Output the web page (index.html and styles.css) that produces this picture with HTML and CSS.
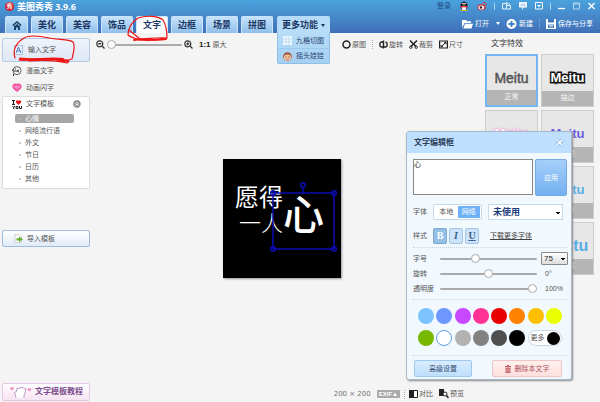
FILE: index.html
```
<!DOCTYPE html>
<html lang="zh-CN">
<head>
    <meta charset="UTF-8">
    <meta name="viewport" content="width=device-width, initial-scale=1.0">
    <title>美图秀秀 3.9.6</title>
    <link rel="stylesheet" href="styles.css">
</head>
<body>
    <!-- Title bar, tabs and file actions -->
    <header class="header">
        <div class="title-row">
            <h1 class="title"><span class="logo">秀</span>美图秀秀 3.9.6</h1>
            <div class="window-tools">
                <a class="login" href="#">登录</a>
                <svg class="qq" width="10" height="10" viewBox="0 0 10 10"><ellipse cx="5" cy="5" rx="3.6" ry="4.6" fill="#182238"/><ellipse cx="5" cy="7" rx="2.4" ry="2.2" fill="#fff"/><path d="M1.5 5h7v1.3h-7z" fill="#e33"/><path d="M3.5 3.6h3L5 4.7zM1.5 9h3v1h-3zM5.500 9h3v1h-3z" fill="#fb2"/><circle cx="3.900" cy="2.500" r=".8" fill="#fff"/><circle cx="6.100" cy="2.500" r=".8" fill="#fff"/></svg>
                <svg class="weibo" width="10" height="10" viewBox="0 0 10 10"><ellipse cx="4.500" cy="6.300" rx="4" ry="3" fill="#e02b2b"/><ellipse cx="4.300" cy="6.400" rx="2.800" ry="2" fill="#fff"/><circle cx="4" cy="6.500" r="1.200" fill="#222"/><path d="M6 1.500c2-.5 3.500 1 3 3" fill="none" stroke="#e02b2b"/></svg>
                <span class="bar"></span>
                <svg class="skin" width="9" height="8" viewBox="0 0 9 8"><path d="M.5 1.500h4v5.500h-4zM4.500 3.500h4V7h-4zM4 .5l4 2" fill="none" stroke="#e8f3fc"/></svg>
                <svg class="chat" width="8" height="8" viewBox="0 0 8 8"><path d="M0 0h8v5.500H4.500L3 8V5.500H0z" fill="#f2f8fe"/><path d="M1.500 2h5M1.500 3.500h5" stroke="#8fb9e0" stroke-width=".6"/></svg>
                <svg class="menu" width="8" height="8" viewBox="0 0 8 8"><path d="M.5.5h7v6.500h-7z" fill="none" stroke="#f2f8fe"/><path d="M2 3h4L4 5.200z" fill="#fff"/></svg>
                <span class="bar"></span>
                <svg class="minimize" width="7" height="8" viewBox="0 0 7 8"><path d="M0 6.500h7" stroke="#fff" stroke-width="1.300"/></svg>
                <svg class="maximize" width="7" height="8" viewBox="0 0 7 8"><path d="M.5 1h6v6h-6zM.5 2h6" fill="none" stroke="#b7d6f0"/></svg>
                <svg class="close" width="7" height="8" viewBox="0 0 7 8"><path d="M.5 1l6 6M6.500 1l-6 6" stroke="#fff" stroke-width="1.400"/></svg>
            </div>
        </div>
        <div class="nav-row">
            <nav class="tabs">
                <button class="tab home" aria-label="首页"><svg width="10" height="9" viewBox="0 0 10 9"><path d="M.8 4.600L5 1l4.200 3.600" fill="none" stroke="#1d3f6b" stroke-width="1.500"/><path d="M2 5.500L5 3l3 2.500V9H6V6.500H4V9H2z" fill="#1d3f6b"/></svg></button>
                <button class="tab">美化</button>
                <button class="tab">美容</button>
                <button class="tab">饰品</button>
                <button class="tab active">文字</button>
                <button class="tab">边框</button>
                <button class="tab">场景</button>
                <button class="tab">拼图</button>
                <div class="more">
                    <button class="tab more-tab">更多功能 <i class="caret"></i></button>
                    <div class="more-menu">
                        <button><svg width="9" height="9" viewBox="0 0 9 9"><path d="M0 0h9v9H0z" fill="#f5fbff"/><path d="M3 0v9M6 0v9M0 3h9M0 6h9" stroke="#a9d0f0" stroke-width=".7"/></svg>九格切图</button>
                        <button><svg width="9" height="9" viewBox="0 0 9 9"><circle cx="4.500" cy="4.500" r="4.300" fill="#a5573b"/><ellipse cx="4.500" cy="5.500" rx="3.600" ry="3" fill="#f3c4a2"/><circle cx="3" cy="5" r=".6" fill="#532"/><circle cx="6" cy="5" r=".6" fill="#532"/><path d="M3.500 7h2" stroke="#c44" stroke-width=".7"/></svg>摇头娃娃</button>
                    </div>
                </div>
            </nav>
            <div class="file-actions">
                <button><svg width="11" height="10" viewBox="0 0 11 10"><path d="M0 9V1h4l1 1.200h4V4H2.500z" fill="#fff"/><path d="M3 4.700h8L9.500 9.500H1.300z" fill="#fff"/></svg>打开 <i class="caret"></i></button>
                <button class="new"><svg width="11" height="10" viewBox="0 0 11 10"><circle cx="5.500" cy="5" r="5" fill="#fff"/><path d="M5.500 2v6M2.500 5h6" stroke="#3f7fc4" stroke-width="1.800"/></svg>新建</button>
                <button class="save"><svg width="10" height="10" viewBox="0 0 10 10"><path d="M0 0h10v10H0z" fill="#fff"/><path d="M2 0h6v3.500H2zM2 5.500h6V9H2z" fill="#4279be"/><path d="M3 6.500h4M3 8h4" stroke="#fff" stroke-width=".7"/></svg>保存与分享</button>
            </div>
        </div>
    </header>

    <main class="main">
        <!-- Text tools -->
        <aside class="sidebar">
            <button class="side-btn input-text"><svg width="9" height="10" viewBox="0 0 9 10"><path d="M.5.5h8v9h-8z" fill="#eef4fc" stroke="#a9bede"/><path d="M2 8l2.500-6L7 8M3 6h3" fill="none" stroke="#4676bf"/></svg>输入文字</button>
            <button class="side-link"><svg width="10" height="10" viewBox="0 0 10 10"><circle cx="5" cy="4.600" r="4" fill="#fff" stroke="#444" stroke-width=".9"/><path d="M0 4h2M2 5h5M6 3.500v3M1.500 8v2M3 3h1" stroke="#333" fill="none"/></svg>漫画文字</button>
            <button class="side-link"><svg width="10" height="9" viewBox="0 0 10 9"><path d="M5 9L1 5.500C-.8 2.500 2-.8 5 1c3-1.800 5.800 1.500 4 4.500z" fill="#f04ca0"/><path d="M3 2.500v3M5 2v5M7 2.500v3M2 4h6" stroke="#fbb5da" stroke-width=".7"/></svg>动画闪字</button>
            <section class="templates">
                <h2><svg width="10" height="9" viewBox="0 0 10 9"><path d="M0 .5h3M1.500.5v4M0 4.500h3" stroke="#222" stroke-width="1.200"/><path d="M6.500 5L4 2.500C3.500.5 5.500-.5 6.500 1 7.500-.5 9.800.5 9 2.500z" fill="#e31414"/><path d="M.5 6l1.200 1.500L3 6M1.700 7.500V9M4 6.500h2v2H4zM7.500 6v2.500h2V6" fill="none" stroke="#222"/></svg>文字模板<span class="collapse"><svg width="8" height="8" viewBox="0 0 8 8"><circle cx="4" cy="4" r="3.700" fill="#8c8c8c"/><path d="M2.200 4L4 2.300 5.800 4M2.200 5.800L4 4l1.800 1.800" fill="none" stroke="#fff" stroke-width=".9"/></svg></span></h2>
                <ul>
                    <li class="selected">心情</li>
                    <li>网络流行语</li>
                    <li>外文</li>
                    <li>节日</li>
                    <li>日历</li>
                    <li>其他</li>
                </ul>
            </section>
            <button class="side-btn import"><svg width="9" height="9" viewBox="0 0 9 9"><path d="M1 .5h4.500l2 2V8.500H1z" fill="#fff" stroke="#bbb" stroke-width=".7"/><path d="M2.500 4.300H5V2.500L9 5.300 5 8V6.400H2.500z" fill="#62b22b"/></svg>导入模板</button>
            <button class="side-btn tutorial"><svg width="22" height="13" viewBox="0 0 22 13"><path d="M6 11.500L4.500 6.500l2-1L7 2.500h2l.5-1 2 .3 1.500-.3 1 1.200 2 .3-1 4-1 2v2.500" fill="#fff" stroke="#a77bb5" stroke-dasharray="1.500 .5"/><path d="M2 4.500L.3 2.800C0 1.300 1.500.9 2 2c.5-1.100 2-.7 1.700.8zM19.500 5.500l-1.700-1.700c-.3-1.500 1.200-1.900 1.700-.8.500-1.100 2-.7 1.700.8z" fill="#eb86b8"/></svg>文字模板教程</button>
        </aside>

        <!-- Picture being edited -->
        <section class="workspace">
            <div class="toolbar">
                <div class="zoom-tools">
                    <svg width="9" height="9" viewBox="0 0 9 9"><circle cx="3.800" cy="3.800" r="3" fill="#fff" stroke="#333" stroke-width="1.200"/><path d="M6 6l2.500 2.500M2.300 3.800h3" stroke="#333" stroke-width="1.400"/></svg>
                    <input class="range zoom-range" type="range" aria-label="缩放" value="0">
                    <svg width="9" height="9" viewBox="0 0 9 9"><circle cx="3.800" cy="3.800" r="3" fill="#fff" stroke="#333" stroke-width="1.200"/><path d="M6 6l2.500 2.500M2.300 3.800h3M3.800 2.300v3" stroke="#333" stroke-width="1.300"/></svg>
                    <button class="actual"><b>1:1</b> 原大</button>
                </div>
                <div class="edit-tools">
                    <button><svg width="9" height="9" viewBox="0 0 9 9"><circle cx="4.500" cy="4.500" r="3.500" fill="none" stroke="#222" stroke-width="1.500"/></svg>原图</button>
                    <i class="dots"></i>
                    <button><svg width="9" height="9" viewBox="0 0 9 9"><path d="M4 7H2.500C.2 6.500.2 2.500 2.500 2H5M5 7h1.500C8.800 6.500 8.800 2.500 6.500 2M4.500.5v8" fill="none" stroke="#222" stroke-width="1.400"/></svg>旋转</button>
                    <button><svg width="9" height="9" viewBox="0 0 9 9"><path d="M1 .5l6 6M8 .5l-6 6" stroke="#222" stroke-width="1.500"/><circle cx="1.800" cy="7.200" r="1.200" fill="none" stroke="#222"/><circle cx="7.200" cy="7.200" r="1.200" fill="none" stroke="#222"/></svg>裁剪</button>
                    <button><svg width="9" height="9" viewBox="0 0 9 9"><path d="M.6 1h7.800v7H.6z" fill="none" stroke="#222" stroke-width="1.200"/><path d="M2 6.800L7 2.200M5 2.200h2v2M2 5v1.800h2" fill="none" stroke="#222"/></svg>尺寸</button>
                </div>
            </div>
            <div class="stage">
                <svg class="picture" width="118" height="119" viewBox="0 0 118 119">
                    <rect width="118" height="119" fill="#000"/>
                    <text x="12" y="47" font-size="24">愿得</text>
                    <text class="light" x="16" y="72" font-size="22">一人</text>
                    <text x="60" y="71" font-size="41" font-weight="500">心</text>
                    <g class="handles">
                        <path d="M50 34h61v56H50zM80 34v-6"/>
                        <circle cx="50" cy="34" r="2.300"/><circle cx="111" cy="34" r="2.300"/><circle cx="50" cy="90" r="2.300"/><circle cx="111" cy="90" r="2.300"/><circle cx="80" cy="26" r="2.300"/>
                    </g>
                </svg>
            </div>
            <footer class="status">
                <span class="size">200 × 200</span>
                <span class="exif">EXIF▲</span>
                <i class="dots"></i>
                <button><svg width="9" height="8" viewBox="0 0 9 8"><path d="M.5.5h8v7h-8z" fill="#fff" stroke="#222"/><path d="M0 0h5v8H0z" fill="#222"/></svg>对比</button>
                <button class="preview"><svg width="10" height="10" viewBox="0 0 10 10"><path d="M0 0h5v7H0z" fill="#222"/><circle cx="6" cy="5" r="2" fill="#fff" stroke="#222"/><path d="M7.500 6.500L9.500 9" stroke="#222" stroke-width="1.500"/></svg>预览</button>
            </footer>
        </section>

        <aside class="effects">
            <h2>文字特效</h2>
            <div class="effect-grid">
                <button class="effect current"><span class="sample">Meitu</span><span class="name">正常</span></button>
                <button class="effect outline"><span class="sample">Meitu</span><span class="name">描边</span></button>
                <button class="effect glow"><span class="sample">Meitu</span><span class="name">荧光</span></button>
                <button class="effect pattern"><span class="sample">Meitu</span><span class="name">纹理</span></button>
                <button class="effect"><span class="sample">Meitu</span><span class="name">阴影</span></button>
                <button class="effect fade"><span class="sample">Meitu</span><span class="name">渐变</span></button>
                <button class="effect"><span class="sample">Meitu</span><span class="name">倒影</span></button>
                <button class="effect fade large"><span class="sample">Meitu</span><span class="name">立体</span></button>
            </div>
        </aside>
    </main>

    <!-- Floating text editor -->
    <form class="dialog">
        <div class="dialog-head">
            <h2>文字编辑框</h2>
            <button type="button" class="dialog-close" aria-label="关闭"><svg width="9" height="9" viewBox="0 0 9 9"><path d="M1.500 1.500l6 6M7.500 1.500l-6 6" stroke="#87b4df" stroke-width="3"/><path d="M1.500 1.500l6 6M7.500 1.500l-6 6" stroke="#fff" stroke-width="1.500"/></svg></button>
        </div>
        <div class="dialog-body">
            <div class="entry">
                <textarea aria-label="文字内容">心</textarea>
                <button type="button" class="apply">应用</button>
            </div>
            <div class="row">
                <label for="font">字体</label>
                <div class="segment"><button type="button">本地</button><button type="button" class="on">网络</button></div>
                <select id="font" class="font-select"><option>未使用</option></select>
            </div>
            <div class="row styles">
                <span class="row-label">样式</span>
                <div class="style-btns">
                    <button type="button" class="on"><b>B</b></button>
                    <button type="button"><i>I</i></button>
                    <button type="button"><u>U</u></button>
                </div>
                <a href="#">下载更多字体</a>
            </div>
            <div class="sliders">
                <label for="size">字号</label>
                <input id="size" class="range" type="range" value="35">
                <select class="size-select" aria-label="字号数值"><option>75</option></select>
                <label for="rotate">旋转</label>
                <input id="rotate" class="range" type="range" value="50">
                <output>0°</output>
                <label for="opacity">透明度</label>
                <input id="opacity" class="range" type="range" value="100">
                <output>100%</output>
            </div>
            <div class="swatches">
                <button type="button" class="sky" aria-label="天蓝"></button>
                <button type="button" class="blue" aria-label="蓝"></button>
                <button type="button" class="purple" aria-label="紫"></button>
                <button type="button" class="pink" aria-label="粉"></button>
                <button type="button" class="red" aria-label="红"></button>
                <button type="button" class="orange" aria-label="橙"></button>
                <button type="button" class="amber" aria-label="金"></button>
                <button type="button" class="yellow" aria-label="黄"></button>
                <button type="button" class="green" aria-label="绿"></button>
                <button type="button" class="white" aria-label="白"></button>
                <button type="button" class="silver" aria-label="浅灰"></button>
                <button type="button" class="gray" aria-label="灰"></button>
                <button type="button" class="dark" aria-label="深灰"></button>
                <button type="button" class="black" aria-label="黑"></button>
                <button type="button" class="more-colors">更多<i></i></button>
            </div>
            <div class="dialog-foot">
                <button type="button" class="advanced">高级设置</button>
                <button type="button" class="delete"><svg width="6" height="8" viewBox="0 0 6 8"><path d="M0 1.500h6M2 .5h2" stroke="#c4636b"/><path d="M.5 2.500h5V8h-5z" fill="#c4636b"/><path d="M2 3.500v3.500M4 3.500v3.500" stroke="#fde0df" stroke-width=".6"/></svg>删除本文字</button>
            </div>
        </div>
    </form>

    <!-- Red pen marks -->
    <svg class="marks" width="180" height="70" viewBox="0 0 180 70">
        <path d="M15 58c-3-8 2-16 9-20 5-3 16-2 25 0 10 2 20 1 24 4 3 4 0 12-1 17l-4 1c-12-1-30 0-48-2M19 60c10 1 22-2 34-1 6 1 10 3 16 2l-2 2c-12-3-26-3-38-2"/>
        <path d="M140 40c-6-2-10-3-12-5 0-7 4-13 10-17 10-3 20-2 25 2 3 5 4 12 4 18-8 2-18 3-28 2M129 30l11 9c8 0 18-2 27-1-10 2-20 3-30 1"/>
        <path class="thick" d="M20 59c12 2 28-2 43 0M134 40c10-2 20 1 32-1"/>
    </svg>
</body>
</html>
```
FILE: styles.css
```
* {
    box-sizing: border-box;
}

body {
    display: flex;
    flex-direction: column;
    min-height: 100vh;
    margin: 0;
    position: relative;
    background-color: #f4f4f4;
    color: #555;
    font-family: "Liberation Sans", "Noto Sans CJK SC", sans-serif;
    font-size: 7px;
    line-height: 10px;
}

h1, h2, ul {
    margin: 0;
    padding: 0;
}

button, select, textarea, input {
    margin: 0;
    padding: 0;
    border: none;
    background: none;
    color: inherit;
    font: inherit;
}

button {
    display: flex;
    align-items: center;
    white-space: nowrap;
    cursor: pointer;
}

svg {
    display: block;
    flex-shrink: 0;
}

.caret {
    border: 2px solid transparent;
    border-top: 3px solid currentColor;
    border-bottom: none;
}

.dots {
    height: 9px;
    border-left: 1px dotted #aaa;
}

/* Header */
.header {
    display: flex;
    flex-direction: column;
    height: 33px;
    background: linear-gradient(#4ba2dd, #406fb8);
    color: white;
}

.title-row, .nav-row {
    display: flex;
    justify-content: space-between;
}

.title-row {
    height: 16px;
    padding: 0 5px;
}

.title {
    display: flex;
    align-items: center;
    gap: 3px;
    height: 13px;
    font-family: "Noto Sans", "Noto Sans CJK SC", sans-serif;
    font-size: 9px;
}

.logo {
    width: 9px;
    height: 9px;
    border-radius: 50%;
    background-color: #dd202c;
    font-size: 6px;
    line-height: 9px;
    text-align: center;
}

.window-tools {
    display: flex;
    align-items: center;
    gap: 8px;
    height: 12px;
}

.login {
    color: #1d4f85;
    text-decoration: none;
}

.bar {
    width: 1px;
    height: 7px;
    margin: 0 -1px;
    background-color: #a8d0f0;
}

.nav-row {
    height: 17px;
    padding: 0 7px 0 5px;
}

.tabs {
    display: flex;
    gap: 3px;
}

.tab {
    justify-content: center;
    width: 32px;
    height: 17px;
    border: 1px solid #cbe4f8;
    border-bottom: none;
    border-radius: 2px 2px 0 0;
    background: linear-gradient(#c5e3fa, #90c0eb);
    color: #1d3763;
    font-size: 9px;
    font-weight: bold;
}

.tab.home {
    width: 23px;
}

.tab.active {
    background: #fcfdfe;
}

.more {
    position: relative;
    margin-left: 1px;
}

.more-tab {
    gap: 3px;
    width: 53px;
    border-color: #b5daf7;
    background: #b7dcf8;
}

.more-menu {
    position: absolute;
    z-index: 2;
    top: 17px;
    left: 0;
    width: 100%;
    border: 1px solid #8fbfe8;
    border-top: none;
    border-radius: 0 0 2px 2px;
    background: linear-gradient(#b7dcf8, #a5cff2);
}

.more-menu button {
    gap: 4px;
    width: 100%;
    height: 15px;
    padding-left: 5px;
    color: #27446f;
}

.more-menu button + button {
    border-top: 1px solid #9bc8ee;
}

.file-actions {
    display: flex;
    align-items: center;
    gap: 6px;
    height: 15px;
}

.file-actions button {
    gap: 2px;
}

.file-actions .caret {
    margin-left: 5px;
}

.file-actions .save {
    padding-left: 6px;
    border-left: 1px dotted #7fa9db;
}

/* Main */
.main {
    display: flex;
    flex: 1;
}

.sidebar {
    display: flex;
    flex-direction: column;
    width: 90px;
    padding: 5px 0 1px 2px;
}

.side-btn {
    gap: 4px;
    height: 17px;
    padding-left: 11px;
    border: 1px solid #9fbbe0;
    border-radius: 2px;
    background: linear-gradient(#fff, #e0ebf8);
}

.side-btn.input-text {
    gap: 5px;
    height: 24px;
    border-color: #b7cbe6;
    background: linear-gradient(#eef3fa, #dee7f5);
}

.side-link {
    gap: 4px;
    height: 17px;
    padding-left: 10px;
}

.templates {
    height: 93px;
    border: 1px solid #ddd;
    border-radius: 2px;
    background-color: white;
}

.templates h2 {
    display: flex;
    align-items: center;
    gap: 4px;
    height: 14px;
    padding: 0 8px 0 9px;
    font-size: 7px;
    font-weight: normal;
}

.collapse {
    margin-left: auto;
}

.templates ul {
    display: grid;
    gap: 3px;
    padding: 3px 15px 0 12px;
    list-style: none;
}

.templates li {
    height: 9px;
    padding-left: 4px;
    border-radius: 2px;
    line-height: 9px;
    white-space: nowrap;
}

.templates li::before {
    content: "";
    display: inline-block;
    width: 2px;
    height: 2px;
    margin-right: 4px;
    border-radius: 50%;
    background-color: #bbb;
    vertical-align: middle;
}

.templates .selected {
    background-color: #a6a6a6;
    color: white;
}

.import {
    margin-top: 41px;
}

.tutorial {
    gap: 3px;
    height: 18px;
    margin-top: auto;
    padding-left: 7px;
    border-color: #e5c9e2;
    background: linear-gradient(#fff, #f6e3f3);
    color: #7c4d8b;
    font-size: 8px;
    font-weight: bold;
}

.workspace {
    display: flex;
    flex: 1;
    flex-direction: column;
}

.toolbar {
    display: flex;
    justify-content: space-between;
    height: 23px;
    padding: 0 22px 0 6px;
}

.zoom-tools, .edit-tools {
    display: flex;
    align-items: center;
    gap: 2px;
}

.edit-tools {
    gap: 6px;
}

.edit-tools button, .status button {
    gap: 1px;
}

.zoom-range {
    width: 75px;
}

.actual {
    gap: 2px;
    margin-left: 4px;
}

.actual b {
    color: #222;
    font-size: 8px;
}

.range {
    height: 9px;
    appearance: none;
}

.range::-webkit-slider-runnable-track {
    height: 2px;
    border-radius: 1px;
    background-color: #aaa;
}

.range::-webkit-slider-thumb {
    width: 9px;
    height: 9px;
    margin-top: -4px;
    border: 1px solid #aaa;
    border-radius: 50%;
    appearance: none;
    background-color: white;
}

.stage {
    display: flex;
    flex: 1;
    align-items: center;
    justify-content: center;
    padding-bottom: 6px;
    padding-right: 11px;
}

.picture {
    box-shadow: 1px 1px 2px #999;
    fill: white;
    font-family: "Noto Sans CJK SC", sans-serif;
}

.picture .light {
    font-weight: 300;
}

.handles {
    fill: none;
    stroke: #0c0cb4;
    stroke-width: 1.5;
}

.status {
    display: flex;
    align-items: center;
    justify-content: flex-end;
    gap: 4px;
    height: 16px;
    padding-right: 21px;
}

.size {
    margin-right: 2px;
    color: #777;
    font-family: "DejaVu Sans", sans-serif;
}

.exif {
    height: 8px;
    padding: 0 2px;
    border-radius: 1px;
    background-color: #aaa;
    color: white;
    font-size: 6px;
    font-weight: bold;
    line-height: 8px;
}

.preview {
    margin-left: 2px;
}

/* Text effects */
.effects {
    width: 115px;
    padding: 6px 6px 0 0;
}

.effects h2 {
    padding-left: 6px;
    color: #333;
    font-size: 8px;
    font-weight: normal;
}

.effect-grid {
    display: grid;
    grid-template-columns: 1fr 1fr;
    gap: 3px;
    margin-top: 5px;
}

.effect {
    flex-direction: column;
    height: 53px;
    border: 1px solid #ccc;
    background-color: #e7e7e7;
}

.effect .sample {
    flex: 1;
    padding-top: 15px;
    color: #555;
    font-size: 13px;
    font-weight: bold;
    line-height: 16px;
}

.effect .name {
    width: 100%;
    height: 15px;
    background-color: #b5b5b5;
    color: #f5f5f5;
    line-height: 14px;
}

.effect.current {
    border: 2px solid #75b5f2;
}

.effect.current .sample {
    padding-top: 14px;
    font-size: 14px;
    font-weight: normal;
    -webkit-text-stroke: 0.5px #555;
}

.effect.outline .sample {
    color: white;
    paint-order: stroke fill;
    -webkit-text-stroke: 3px #111;
}

.effect.glow .sample {
    color: white;
    text-shadow: 0 0 2px #f59bdc, 0 0 2px #f59bdc, 0 0 3px #f59bdc;
}

.effect.pattern .sample {
    color: #6a5be0;
}

.effect.fade .sample {
    color: #58aee6;
}

.effect.large .sample {
    font-size: 16px;
}

/* Text editor */
.dialog {
    position: absolute;
    z-index: 3;
    top: 131px;
    right: 28px;
    width: 166px;
    border: 1px solid #a9b9ca;
    border-radius: 3px;
    background-color: #f1f8fe;
    box-shadow: 1px 1px 2px #888;
}

.dialog-head {
    display: flex;
    align-items: center;
    justify-content: space-between;
    height: 21px;
    padding: 0 7px;
    border-radius: 2px 2px 0 0;
    background-color: #bfdffe;
}

.dialog-head h2 {
    color: #2c4059;
    font-size: 8px;
}

.dialog-body {
    padding: 6px 4px 2px 6px;
}

.entry {
    display: flex;
    gap: 2px;
}

.entry textarea {
    flex: 1;
    width: 0;
    height: 36px;
    border: 1px solid #888;
    background-color: white;
    color: #222;
    resize: none;
}

.apply {
    justify-content: center;
    width: 32px;
    height: 37px;
    border: 1px solid #76a9e2;
    border-radius: 2px;
    background: linear-gradient(#a5cffa, #74aff1);
    color: white;
}

.row {
    display: flex;
    align-items: center;
    height: 16px;
    margin-top: 8px;
}

.row label, .row-label {
    width: 20px;
}

.segment {
    display: flex;
    width: 49px;
    height: 16px;
    padding: 1px;
    border: 1px solid #c8d8e8;
    border-radius: 2px;
    background-color: white;
}

.segment button {
    flex: 1;
    justify-content: center;
}

.segment .on {
    background-color: #6eb1f7;
    color: white;
}

.font-select {
    width: 75px;
    height: 16px;
    margin-left: 6px;
    padding: 0 4px;
    border: 1px solid #c8dbea;
    appearance: none;
    background: linear-gradient(#111, #111) 67px 7px / 4px 1px no-repeat, linear-gradient(#111, #111) 68px 8px / 2px 1px no-repeat, white;
    color: #1c3d7b;
    font-size: 9px;
    font-weight: bold;
}

.style-btns {
    display: flex;
    gap: 2px;
}

.style-btns button {
    justify-content: center;
    width: 14px;
    height: 16px;
    border: 1px solid #a5c4e2;
    border-radius: 2px;
    background-color: #cbe4fb;
    color: #3d5f85;
    font-family: "Liberation Serif", serif;
    font-size: 10px;
    font-weight: bold;
}

.style-btns .on {
    border-color: #7ea7cf;
    background-color: #95bfe6;
    color: white;
}

.styles a {
    margin-left: 11px;
    color: #444;
}

.sliders {
    display: grid;
    grid-template-columns: 27px 97px 1fr;
    grid-template-rows: 15px 15px 16px;
    align-items: center;
    margin-top: 3px;
    padding: 3px 0 2px;
    border-top: 1px dotted #c7d4df;
    border-bottom: 1px dotted #c7d4df;
    white-space: nowrap;
}

.sliders output {
    padding-left: 8px;
}

.size-select {
    width: 27px;
    height: 13px;
    margin-left: 4px;
    padding-left: 2px;
    border: 1px solid #888;
    border-radius: 1px;
    appearance: none;
    background: linear-gradient(#111, #111) 19px 5px / 4px 1px no-repeat, linear-gradient(#111, #111) 20px 6px / 2px 1px no-repeat, linear-gradient(#fff, #ddd);
    color: #222;
    font-size: 8px;
}

.swatches {
    display: grid;
    grid-template-columns: repeat(8, 1fr);
    gap: 6px 2px;
    padding: 8px 5px 9px;
}

.swatches button {
    width: 16px;
    height: 16px;
    border-radius: 50%;
}

.sky { background-color: #7cc3ff; }
.blue { background-color: #6e98ff; }
.purple { background-color: #c848ff; }
.pink { background-color: #ff3296; }
.red { background-color: #e80000; }
.orange { background-color: #ff8200; }
.amber { background-color: #ffbe00; }
.yellow { background-color: #eaff00; }
.green { background-color: #78b700; }
.silver { background-color: #b2b2b2; }
.gray { background-color: #828282; }
.dark { background-color: #4f4f4f; }
.black { background-color: #000; }

.swatches .white {
    border: 1px solid #5d9fe8;
    background-color: white;
}

.swatches .more-colors {
    grid-column: span 2;
    justify-content: space-between;
    width: 100%;
    padding: 0 1px 0 2px;
    border: 1px solid #c4d8ea;
    border-radius: 8px;
    background-color: white;
}

.more-colors i {
    width: 13px;
    height: 13px;
    border-radius: 50%;
    background-color: #000;
}

.dialog-foot {
    display: flex;
    justify-content: space-between;
    padding: 4px 5px 0 1px;
    border-top: 1px dotted #c7d4df;
}

.dialog-foot button {
    justify-content: center;
    height: 17px;
    border: 1px solid #9fc8ed;
    border-radius: 2px;
}

.advanced {
    width: 58px;
    background: linear-gradient(#d8ecff, #bfdffd);
    color: #334d6b;
}

.dialog-foot .delete {
    gap: 4px;
    width: 70px;
    border-color: #eec4c4;
    background: linear-gradient(#fff0ef, #fde0df);
    color: #b0525a;
}

/* Pen marks drawn over the page */
.marks {
    position: absolute;
    z-index: 4;
    top: 0;
    left: 0;
    fill: none;
    pointer-events: none;
    stroke: #f01414;
    stroke-linecap: round;
    stroke-linejoin: round;
    stroke-width: 1.2;
}

.marks .thick {
    stroke-width: 2;
}
```
